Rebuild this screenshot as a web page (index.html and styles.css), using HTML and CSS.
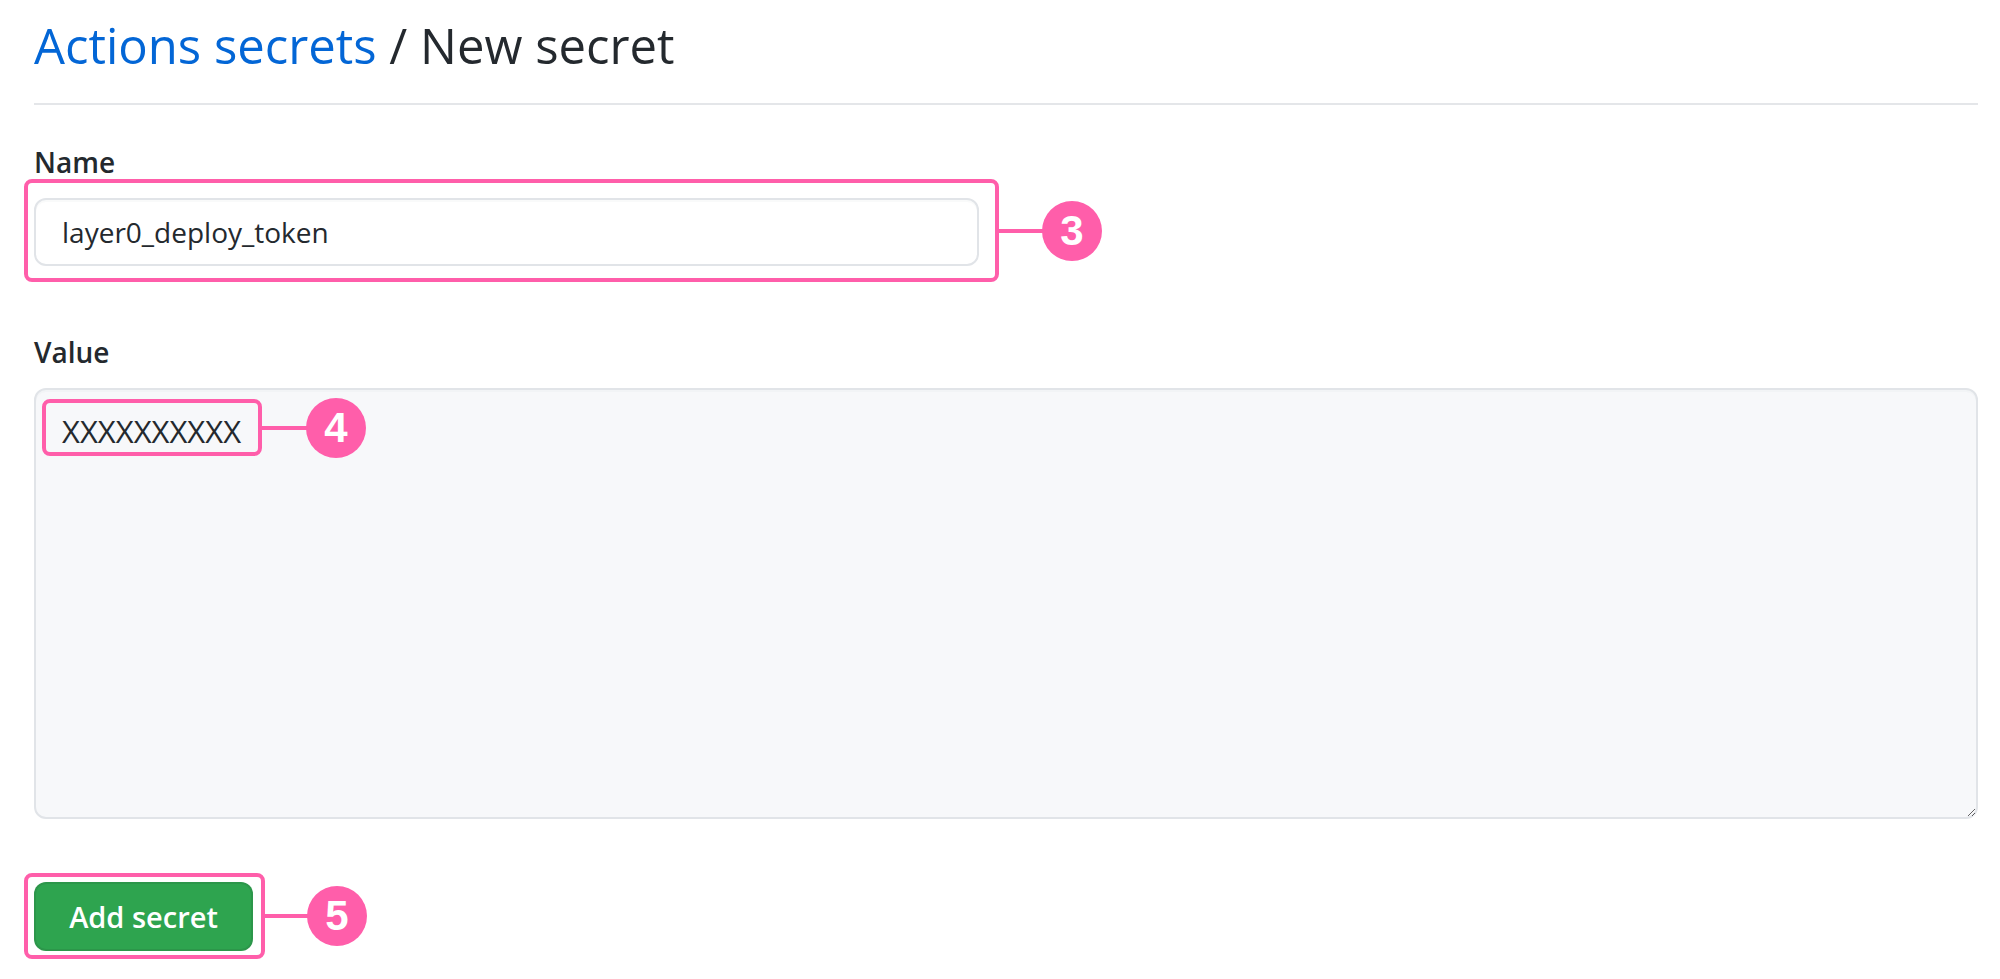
FILE: index.html
```html
<!DOCTYPE html>
<html lang="en">
<head>
<meta charset="utf-8">
<title>Actions secrets / New secret</title>
<link rel="stylesheet" href="styles.css">
</head>
<body>
<main class="page">
  <div class="subhead">
    <h2 class="subhead-heading"><a class="crumb" href="#">Actions secrets</a> / New secret</h2>
  </div>
  <form class="secret-form">
    <div class="form-group">
      <label class="form-label" for="secret-name">Name</label>
      <div class="anchor anchor-fit">
        <input class="form-control name-input" id="secret-name" type="text" value="layer0_deploy_token">
        <span class="annot annot-name"><span class="badge">3</span></span>
      </div>
    </div>
    <div class="form-group form-group-value">
      <label class="form-label" for="secret-value">Value</label>
      <div class="anchor">
        <textarea class="form-control value-input" id="secret-value">XXXXXXXXXX</textarea>
        <span class="annot annot-value"><span class="badge">4</span></span>
      </div>
    </div>
    <div class="anchor anchor-fit">
      <button class="btn-primary" type="button">Add secret</button>
      <span class="annot annot-button"><span class="badge">5</span></span>
    </div>
  </form>
</main>
</body>
</html>
```
FILE: styles.css
```css
html, body {
  margin: 0;
  padding: 0;
  background: #ffffff;
}

body {
  font-family: "Open Sans", "Noto Sans", sans-serif;
  color: #24292e;
}

.page {
  box-sizing: border-box;
  min-height: 979px;
  padding: 0 22px 40px 34px;
}

.subhead {
  padding-top: 14px;
  padding-bottom: 27px;
  border-bottom: 2px solid #e4e6e9;
}

.subhead-heading {
  margin: 0;
  font-size: 49px;
  line-height: 62px;
  font-weight: 400;
  color: #24292e;
}

.crumb {
  color: #0366d6;
  text-decoration: none;
}

.secret-form {
  padding-top: 36px;
}

.form-group {
  display: flex;
  flex-direction: column;
  align-items: stretch;
}

.form-group-value {
  margin-top: 65px;
}

.form-label {
  font-size: 28px;
  line-height: 42px;
  font-weight: 600;
  margin-bottom: 15px;
}

.anchor {
  position: relative;
}

.anchor-fit {
  width: fit-content;
}

.form-control {
  box-sizing: border-box;
  border: 2px solid #e1e4e8;
  border-radius: 12px;
  font-family: "Open Sans", "Noto Sans", sans-serif;
  color: #24292e;
  outline: none;
  box-shadow: inset 0 2px 0 rgba(225, 228, 232, 0.2);
}

.name-input {
  display: block;
  width: 945px;
  height: 68px;
  padding: 0 26px;
  font-size: 28px;
  background: #ffffff;
}

.value-input {
  display: block;
  width: 100%;
  height: 431px;
  padding: 21px 26px;
  font-size: 31px;
  line-height: 40px;
  background: #f7f8fa;
  resize: vertical;
}

.secret-form > .anchor-fit {
  margin-top: 63px;
}

.btn-primary {
  display: block;
  box-sizing: border-box;
  width: 219px;
  height: 69px;
  padding: 0;
  border: 2px solid rgba(27, 31, 35, 0.1);
  border-radius: 12px;
  background: #2ea44f;
  color: #ffffff;
  font-family: "Open Sans", "Noto Sans", sans-serif;
  font-size: 29px;
  font-weight: 600;
  cursor: pointer;
}

/* annotation overlays */
.annot {
  position: absolute;
  border: 4px solid #ff5eaa;
  border-radius: 8px;
  pointer-events: none;
}

.annot::after {
  content: "";
  position: absolute;
  left: 100%;
  top: 50%;
  width: 52px;
  height: 4px;
  margin-top: -2px;
  background: #ff5eaa;
}

.badge {
  position: absolute;
  top: 50%;
  width: 60px;
  height: 60px;
  margin-top: -30px;
  border-radius: 50%;
  background: #ff5eaa;
  color: #ffffff;
  font-family: "Liberation Sans", Arial, sans-serif;
  font-weight: 700;
  font-size: 42px;
  line-height: 60px;
  text-align: center;
  z-index: 1;
}

.annot-name {
  left: -10px;
  right: -20px;
  top: -19px;
  bottom: -16px;
}

.annot-name .badge {
  left: calc(100% + 47px);
}

.annot-value {
  left: 8px;
  top: 11px;
  width: 212px;
  height: 49px;
}

.annot-value .badge {
  left: calc(100% + 48px);
}

.annot-button {
  left: -10px;
  right: -12px;
  top: -9px;
  bottom: -8px;
}

.annot-button .badge {
  left: calc(100% + 46px);
}
```
